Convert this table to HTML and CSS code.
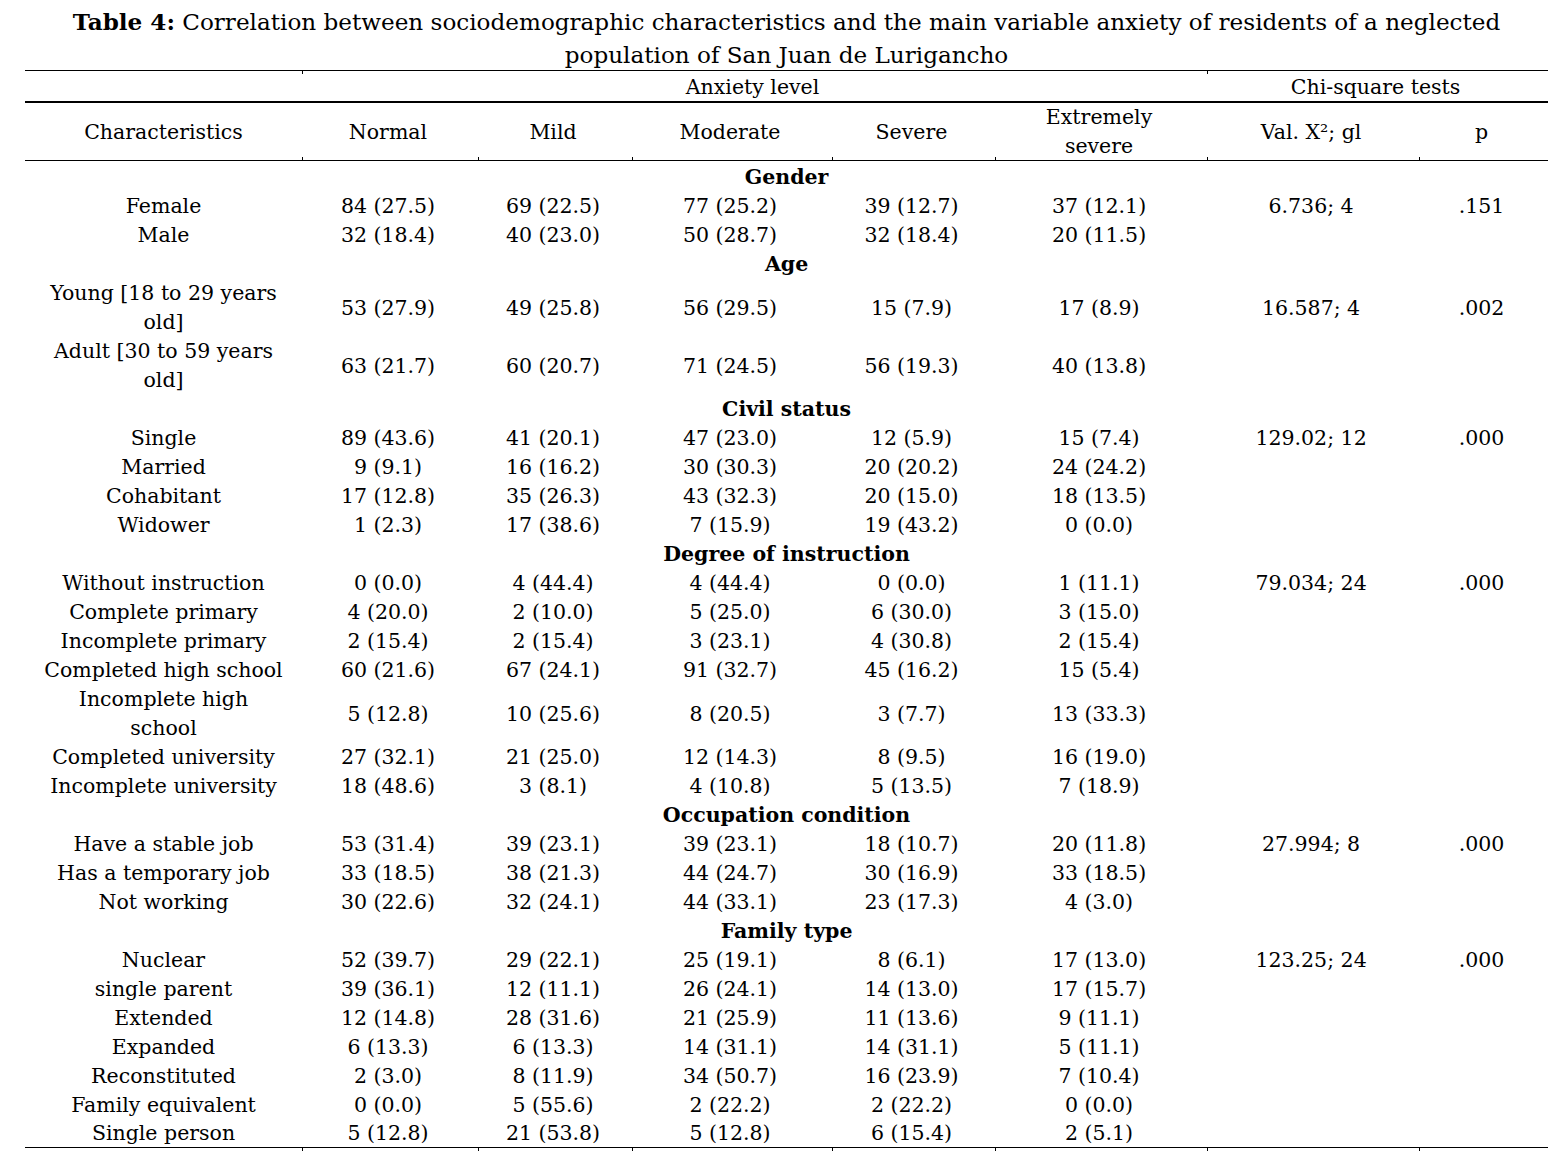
FILE: index.html
```html
<!DOCTYPE html>
<html lang="en">
<head>
<meta charset="utf-8">
<title>Table 4</title>
<link rel="stylesheet" href="styles.css">
</head>
<body>
<div class="sheet">
  <h1 class="caption"><b>Table 4:</b> Correlation between sociodemographic characteristics and the main variable anxiety of residents of a neglected<br>population of San Juan de Lurigancho</h1>
  <table class="tbl">
    <colgroup>
      <col class="c-char"><col class="c-normal"><col class="c-mild"><col class="c-mod"><col class="c-sev"><col class="c-ext"><col class="c-chi"><col class="c-p">
    </colgroup>
    <thead>
      <tr class="super">
        <th></th>
        <th colspan="5" class="tick-top">Anxiety level</th>
        <th colspan="2" class="tick-top">Chi-square tests</th>
      </tr>
      <tr class="heads">
        <th>Characteristics</th>
        <th class="tick-bot">Normal</th>
        <th class="tick-bot">Mild</th>
        <th class="tick-bot">Moderate</th>
        <th class="tick-bot">Severe</th>
        <th class="tick-bot two">Extremely<br>severe</th>
        <th class="tick-bot">Val. X²; gl</th>
        <th class="tick-bot">p</th>
      </tr>
    </thead>
    <tbody>
      <tr class="group first"><td colspan="8">Gender</td></tr>
      <tr><td>Female</td><td>84 (27.5)</td><td>69 (22.5)</td><td>77 (25.2)</td><td>39 (12.7)</td><td>37 (12.1)</td><td>6.736; 4</td><td>.151</td></tr>
      <tr><td>Male</td><td>32 (18.4)</td><td>40 (23.0)</td><td>50 (28.7)</td><td>32 (18.4)</td><td>20 (11.5)</td><td></td><td></td></tr>

      <tr class="group"><td colspan="8">Age</td></tr>
      <tr><td>Young [18 to 29 years<br>old]</td><td>53 (27.9)</td><td>49 (25.8)</td><td>56 (29.5)</td><td>15 (7.9)</td><td>17 (8.9)</td><td>16.587; 4</td><td>.002</td></tr>
      <tr><td>Adult [30 to 59 years<br>old]</td><td>63 (21.7)</td><td>60 (20.7)</td><td>71 (24.5)</td><td>56 (19.3)</td><td>40 (13.8)</td><td></td><td></td></tr>

      <tr class="group"><td colspan="8">Civil status</td></tr>
      <tr><td>Single</td><td>89 (43.6)</td><td>41 (20.1)</td><td>47 (23.0)</td><td>12 (5.9)</td><td>15 (7.4)</td><td>129.02; 12</td><td>.000</td></tr>
      <tr><td>Married</td><td>9 (9.1)</td><td>16 (16.2)</td><td>30 (30.3)</td><td>20 (20.2)</td><td>24 (24.2)</td><td></td><td></td></tr>
      <tr><td>Cohabitant</td><td>17 (12.8)</td><td>35 (26.3)</td><td>43 (32.3)</td><td>20 (15.0)</td><td>18 (13.5)</td><td></td><td></td></tr>
      <tr><td>Widower</td><td>1 (2.3)</td><td>17 (38.6)</td><td>7 (15.9)</td><td>19 (43.2)</td><td>0 (0.0)</td><td></td><td></td></tr>

      <tr class="group"><td colspan="8">Degree of instruction</td></tr>
      <tr><td>Without instruction</td><td>0 (0.0)</td><td>4 (44.4)</td><td>4 (44.4)</td><td>0 (0.0)</td><td>1 (11.1)</td><td>79.034; 24</td><td>.000</td></tr>
      <tr><td>Complete primary</td><td>4 (20.0)</td><td>2 (10.0)</td><td>5 (25.0)</td><td>6 (30.0)</td><td>3 (15.0)</td><td></td><td></td></tr>
      <tr><td>Incomplete primary</td><td>2 (15.4)</td><td>2 (15.4)</td><td>3 (23.1)</td><td>4 (30.8)</td><td>2 (15.4)</td><td></td><td></td></tr>
      <tr><td>Completed high school</td><td>60 (21.6)</td><td>67 (24.1)</td><td>91 (32.7)</td><td>45 (16.2)</td><td>15 (5.4)</td><td></td><td></td></tr>
      <tr><td>Incomplete high<br>school</td><td>5 (12.8)</td><td>10 (25.6)</td><td>8 (20.5)</td><td>3 (7.7)</td><td>13 (33.3)</td><td></td><td></td></tr>
      <tr><td>Completed university</td><td>27 (32.1)</td><td>21 (25.0)</td><td>12 (14.3)</td><td>8 (9.5)</td><td>16 (19.0)</td><td></td><td></td></tr>
      <tr><td>Incomplete university</td><td>18 (48.6)</td><td>3 (8.1)</td><td>4 (10.8)</td><td>5 (13.5)</td><td>7 (18.9)</td><td></td><td></td></tr>

      <tr class="group"><td colspan="8">Occupation condition</td></tr>
      <tr><td>Have a stable job</td><td>53 (31.4)</td><td>39 (23.1)</td><td>39 (23.1)</td><td>18 (10.7)</td><td>20 (11.8)</td><td>27.994; 8</td><td>.000</td></tr>
      <tr><td>Has a temporary job</td><td>33 (18.5)</td><td>38 (21.3)</td><td>44 (24.7)</td><td>30 (16.9)</td><td>33 (18.5)</td><td></td><td></td></tr>
      <tr><td>Not working</td><td>30 (22.6)</td><td>32 (24.1)</td><td>44 (33.1)</td><td>23 (17.3)</td><td>4 (3.0)</td><td></td><td></td></tr>

      <tr class="group"><td colspan="8">Family type</td></tr>
      <tr><td>Nuclear</td><td>52 (39.7)</td><td>29 (22.1)</td><td>25 (19.1)</td><td>8 (6.1)</td><td>17 (13.0)</td><td>123.25; 24</td><td>.000</td></tr>
      <tr><td>single parent</td><td>39 (36.1)</td><td>12 (11.1)</td><td>26 (24.1)</td><td>14 (13.0)</td><td>17 (15.7)</td><td></td><td></td></tr>
      <tr><td>Extended</td><td>12 (14.8)</td><td>28 (31.6)</td><td>21 (25.9)</td><td>11 (13.6)</td><td>9 (11.1)</td><td></td><td></td></tr>
      <tr><td>Expanded</td><td>6 (13.3)</td><td>6 (13.3)</td><td>14 (31.1)</td><td>14 (31.1)</td><td>5 (11.1)</td><td></td><td></td></tr>
      <tr><td>Reconstituted</td><td>2 (3.0)</td><td>8 (11.9)</td><td>34 (50.7)</td><td>16 (23.9)</td><td>7 (10.4)</td><td></td><td></td></tr>
      <tr><td>Family equivalent</td><td>0 (0.0)</td><td>5 (55.6)</td><td>2 (22.2)</td><td>2 (22.2)</td><td>0 (0.0)</td><td></td><td></td></tr>
      <tr class="last"><td>Single person</td><td>5 (12.8)</td><td>21 (53.8)</td><td>5 (12.8)</td><td>6 (15.4)</td><td>2 (5.1)</td><td></td><td></td></tr>
    </tbody>
    <tfoot>
      <tr class="ticks"><td></td><td></td><td></td><td></td><td></td><td></td><td></td><td></td></tr>
    </tfoot>
  </table>
</div>
</body>
</html>
```

FILE: styles.css
```css
html, body {
  margin: 0;
  padding: 0;
  background: #ffffff;
}

body {
  font-family: "DejaVu Serif", "Liberation Serif", serif;
  color: #000000;
}

.sheet {
  width: 1523px;
  margin-left: 25px;
  padding-top: 5px;
}

.caption {
  margin: 0;
  font-size: 23.1px;
  font-weight: normal;
  line-height: 33px;
  text-align: center;
  height: 65px;
}

.caption b {
  font-weight: bold;
}

.tbl {
  width: 1523px;
  border-collapse: collapse;
  table-layout: fixed;
  font-size: 20.5px;
}

.c-char { width: 277px; }
.c-normal { width: 176px; }
.c-mild { width: 154px; }
.c-mod { width: 200px; }
.c-sev { width: 163px; }
.c-ext { width: 212px; }
.c-chi { width: 212px; }
.c-p { width: 129px; }

.tbl th,
.tbl td {
  padding: 0 4px 0 0;
  text-align: center;
  vertical-align: middle;
  line-height: 29px;
  white-space: nowrap;
  font-weight: normal;
}

.tbl th:first-child,
.tbl td:first-child {
  padding-right: 0;
}

.super th {
  border-top: 1px solid #000;
  border-bottom: 2px solid #000;
  height: 28px;
  line-height: 28px;
  padding-top: 2px;
}

.heads th {
  border-bottom: 1px solid #000;
  height: 55px;
  line-height: 28px;
  padding-top: 1px;
}

.heads th.two {
  line-height: 28.5px;
  padding-top: 0;
}

.tick-top {
  background: linear-gradient(#000, #000) no-repeat left top / 1px 3px;
}

.tick-bot {
  background: linear-gradient(#000, #000) no-repeat left bottom / 1px 3px;
}

.group td {
  font-weight: bold;
  padding-right: 0;
  padding-left: 0;
}

.group.first td {
  padding-top: 2px;
}

.tbl .last td {
  border-bottom: 1px solid #000;
  line-height: 27px;
}

.ticks td {
  height: 3px;
  line-height: 3px;
  padding: 0;
}

.ticks td + td {
  border-left: 1px solid #000;
}
```
